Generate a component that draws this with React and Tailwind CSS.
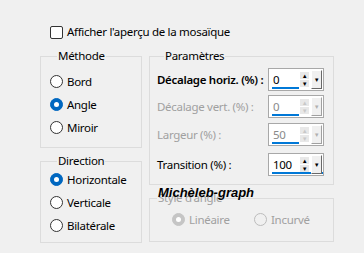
import { useState } from "react";

const FONT = { fontFamily: '"Noto Sans", "Open Sans", sans-serif' };

const Radio = ({ label, checked, disabled, onClick, className = "" }) => (
  <div
    className={`flex items-center gap-[4px] h-[23px] cursor-default whitespace-nowrap ${className}`}
    onClick={disabled ? undefined : onClick}
  >
    <span
      className={`w-[13px] h-[13px] shrink-0 rounded-full border flex items-center justify-center ${
        disabled
          ? checked
            ? "border-[#c5c5c5] bg-[#c5c5c5]"
            : "border-[#bcbcbc] bg-[#f0f0f0]"
          : checked
          ? "border-[#0067c0] bg-[#0067c0]"
          : "border-[#333] bg-white"
      }`}
    >
      {checked && <span className="w-[5px] h-[5px] rounded-full bg-white" />}
    </span>
    <span className={disabled ? "text-[#a0a0a0]" : "text-black"}>{label}</span>
  </div>
);

const Group = ({ title, className, children, disabled }) => (
  <fieldset className={`border border-[#dcdcdc] m-0 ${className}`}>
    <legend className={`ml-[7px] px-[1px] leading-[14px] ${disabled ? "text-[#a0a0a0]" : "text-black"}`}>
      {title}
    </legend>
    {children}
  </fieldset>
);

const Spin = ({ value, disabled, full }) => (
  <div className="w-[56px] h-[23px] shrink-0 border border-[#a8a8a8] bg-white flex items-center pl-[3px] pr-[1px]">
    <div className="relative flex-1 h-full flex items-center">
      <span className={`pl-[1px] ${disabled ? "text-[#8a8a8a]" : "text-black"}`}>{value}</span>
      <span
        className={`absolute bottom-[1px] left-0 h-[2px] bg-[#0078d7] ${full ? "w-[51px]" : "w-[27px]"}`}
      />
    </div>
    <div className="flex flex-col w-[9px] h-[15px] mr-[2px] z-10">
      <span
        className={`h-[7px] flex items-center justify-center text-[6px] leading-none bg-[#e8e8e8] ${
          disabled ? "text-[#c8c8c8]" : "text-black"
        }`}
      >
        ▲
      </span>
      <span
        className={`h-[8px] flex items-center justify-center text-[6px] leading-none bg-[#e8e8e8] border-t border-white ${
          disabled ? "text-[#c8c8c8]" : "text-black"
        }`}
      >
        ▼
      </span>
    </div>
    <div
      className={`w-[11px] h-[19px] z-10 bg-[#f0f0f0] border border-t-white border-l-white flex items-center justify-center text-[6px] leading-none ${
        disabled ? "text-[#b0b0b0] border-r-[#a0a0a0] border-b-[#a0a0a0]" : "text-black border-r-[#696969] border-b-[#696969]"
      }`}
    >
      ▼
    </div>
  </div>
);

const Row = ({ label, value, disabled, full, bold, className = "" }) => (
  <div className={`flex items-center justify-between h-[23px] whitespace-nowrap ${className}`}>
    <span className={`${disabled ? "text-[#a0a0a0]" : "text-black"} ${bold ? "font-semibold" : ""}`}>{label}</span>
    <Spin value={value} disabled={disabled} full={full} />
  </div>
);

export default function App() {
  const [preview, setPreview] = useState(false);
  const [method, setMethod] = useState("Angle");
  const [dir, setDir] = useState("Horizontale");

  return (
    <div
      className="w-[364px] h-[253px] bg-[#f0f0f0] text-[11.5px] tracking-[-0.3px] overflow-hidden"
      style={FONT}
    >
      <div className="pt-[25px] pl-[50px] flex items-center gap-[4px] h-[39px]" onClick={() => setPreview(!preview)}>
        <span className="w-[13px] h-[13px] border border-[#333] rounded-[2px] bg-white" />
        <span>Afficher l'aperçu de la mosaïque</span>
      </div>

      <div className="flex pl-[40px] pt-[10px] gap-[7px]">
        <div className="flex flex-col w-[102px]">
          <Group title="Méthode" className="pl-[9px] pt-[7px] pb-[8px]">
            {["Bord", "Angle", "Miroir"].map((m) => (
              <Radio key={m} label={m} checked={method === m} onClick={() => setMethod(m)} />
            ))}
          </Group>
          <Group title="Direction" className="pl-[9px] mt-[6px] pb-[5px]">
            {["Horizontale", "Verticale", "Bilatérale"].map((d) => (
              <Radio key={d} label={d} checked={dir === d} onClick={() => setDir(d)} />
            ))}
          </Group>
        </div>

        <div className="flex flex-col w-[185px] relative">
          <Group title="Paramètres" className="pl-[7px] pr-[9px] pt-[5px] pb-[8px]">
            <Row label="Décalage horiz. (%) :" value="0" bold />
            <Row label="Décalage vert. (%) :" value="0" disabled className="mt-[4px]" />
            <Row label="Largeur (%) :" value="50" disabled className="mt-[5px]" />
            <Row label="Transition (%) :" value="100" full className="mt-[7px]" />
          </Group>
          <Group title="Style d'angle" disabled className="mt-[6px] pt-[3px] pb-[10px]">
            <div className="flex pl-[22px]">
              <Radio label="Linéaire" checked disabled className="w-[82px]" />
              <Radio label="Incurvé" disabled />
            </div>
          </Group>
          {/* watermark lying over the group box legend */}
          <span
            className="absolute left-[9px] top-[137px] text-[13px] font-bold italic text-black leading-none tracking-[0px]"
            style={{ fontFamily: '"Liberation Sans", Arial, sans-serif' }}
          >
            Michèleb-graph
          </span>
        </div>
      </div>
    </div>
  );
}
